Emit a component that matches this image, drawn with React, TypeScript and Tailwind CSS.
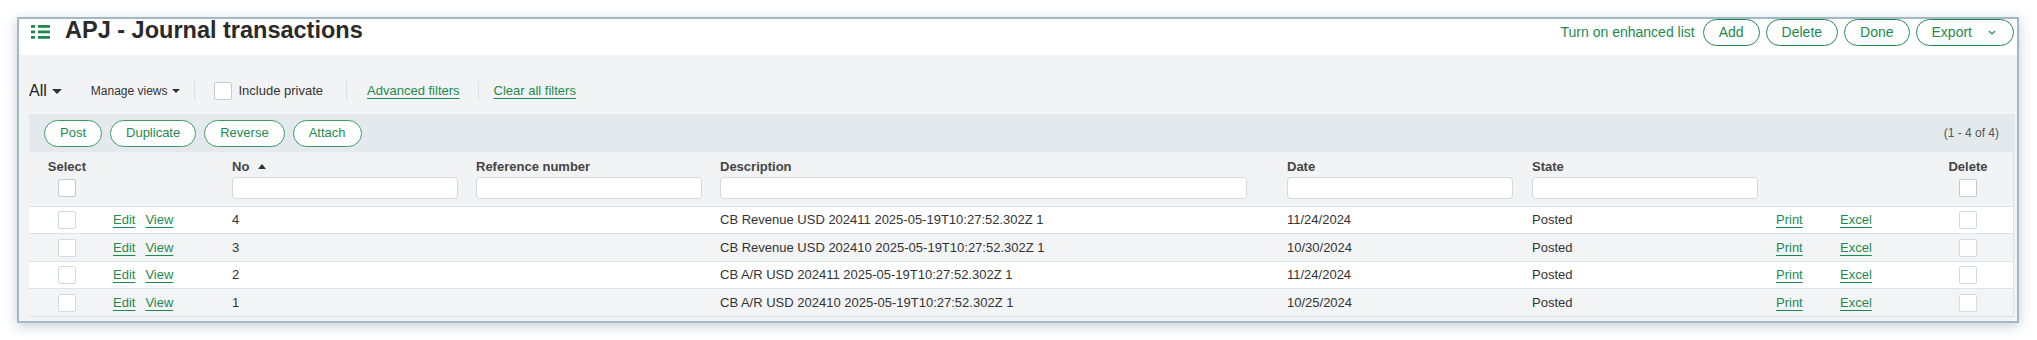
import React from "react";

const rows = [
  { no: "4", desc: "CB Revenue USD 202411 2025-05-19T10:27:52.302Z 1", date: "11/24/2024" },
  { no: "3", desc: "CB Revenue USD 202410 2025-05-19T10:27:52.302Z 1", date: "10/30/2024" },
  { no: "2", desc: "CB A/R USD 202411 2025-05-19T10:27:52.302Z 1", date: "11/24/2024" },
  { no: "1", desc: "CB A/R USD 202410 2025-05-19T10:27:52.302Z 1", date: "10/25/2024" },
];

const GRID =
  "grid grid-cols-[76px_127px_244px_244px_567px_245px_244px_64px_90px_76px_1fr]";

function Box({ light }: { light?: boolean }) {
  return (
    <div
      className={
        "w-[18px] h-[18px] bg-white rounded-[2px] border " +
        (light ? "border-[#d3d9de]" : "border-[#c3cad0]")
      }
    />
  );
}

function Caret({ w, h }: { w: number; h: number }) {
  return (
    <svg width={w} height={h} viewBox="0 0 10 5" className="fill-[#333]">
      <path d="M0 0 L10 0 L5 5 Z" />
    </svg>
  );
}

function Link({ children }: { children: React.ReactNode }) {
  return (
    <span className="text-[#1d8a4d] underline underline-offset-[3px] decoration-[1px]">
      {children}
    </span>
  );
}

function HeadBtn({ children }: { children: React.ReactNode }) {
  return (
    <button className="h-[27px] px-[15px] rounded-full border-[1.5px] border-[#1f8a4f] bg-white text-[14px] text-[#1d8a4d] flex items-center">
      {children}
    </button>
  );
}

function BandBtn({ children }: { children: React.ReactNode }) {
  return (
    <button className="h-[27px] px-[15px] rounded-full border border-[#3c9d64] bg-white text-[13px] text-[#1d8a4d] flex items-center">
      {children}
    </button>
  );
}

function Sep() {
  return <div className="w-px h-[20px] bg-[#dfe2e5]" />;
}

function HeadCell({ label, input, width, sort }: { label: string; input?: boolean; width?: string; sort?: boolean }) {
  return (
    <div className="flex flex-col items-start pt-[6px]">
      <div className="h-[17px] flex items-center text-[13px] font-bold text-[#444]">
        {label}
        {sort && (
          <svg width="8" height="5" viewBox="0 0 8 5" className="ml-[9px] fill-[#333]">
            <path d="M0 5 L8 5 L4 0 Z" />
          </svg>
        )}
      </div>
      {input && (
        <div className={"mt-[2px] h-[22px] bg-white border border-[#d2dadf] rounded-[4px] " + (width ?? "w-[226px]")} />
      )}
    </div>
  );
}

export default function App() {
  return (
    <div className="w-[2037px] h-[340px] bg-white pt-[17px] pl-[17px] font-['Liberation_Sans',Arial,sans-serif] text-[#333]">
      <div className="w-[2002px] h-[306px] border-2 border-[#a3b8c5] shadow-[0_3px_12px_rgba(70,95,115,0.3)] flex flex-col bg-[#f2f3f5]">
        {/* Header */}
        <div className="h-[36px] bg-white flex items-start pr-[3px]">
          <svg width="19" height="14" viewBox="0 0 19 14" className="ml-[12px] mt-[6px] fill-[#1d8a4d]">
            <rect x="0" y="0" width="4" height="2.8" />
            <rect x="7" y="0" width="12" height="2.8" />
            <rect x="0" y="5.5" width="4" height="2.8" />
            <rect x="7" y="5.5" width="12" height="2.8" />
            <rect x="0" y="11" width="4" height="2.8" />
            <rect x="7" y="11" width="12" height="2.8" />
          </svg>
          <div className="ml-[15px] text-[23.5px] leading-none font-bold text-[#2a2a2a]">
            APJ - Journal transactions
          </div>
          <div className="ml-auto flex items-center h-[27px]">
            <span className="text-[14px] text-[#1d8a4d] mr-[8px]">Turn on enhanced list</span>
            <div className="flex items-center gap-[6px]">
              <HeadBtn>Add</HeadBtn>
              <HeadBtn>Delete</HeadBtn>
              <HeadBtn>Done</HeadBtn>
              <HeadBtn>
                Export
                <svg width="8" height="5" viewBox="0 0 8 5" className="ml-[16px] mr-[2px] stroke-[#1d8a4d] fill-none">
                  <path d="M1 1 L4 4 L7 1" strokeWidth="1.2" />
                </svg>
              </HeadBtn>
            </div>
          </div>
        </div>

        {/* Gray body */}
        <div className="flex-1 pl-[10px] pr-[2px] pt-[24px]">
          {/* Filter row */}
          <div className="h-[24px] flex items-center">
            <span className="text-[16px] text-[#222]">All</span>
            <span className="ml-[5px]">
              <Caret w={10} h={5} />
            </span>
            <span className="ml-[29px] text-[12px] text-[#333]">Manage views</span>
            <span className="ml-[4px]">
              <Caret w={8} h={4} />
            </span>
            <div className="ml-[14px]">
              <Sep />
            </div>
            <div className="ml-[19px]">
              <Box />
            </div>
            <span className="ml-[7px] text-[13px] text-[#333]">Include private</span>
            <div className="ml-[23px]">
              <Sep />
            </div>
            <span className="ml-[20px] text-[13px]">
              <Link>Advanced filters</Link>
            </span>
            <div className="ml-[18px]">
              <Sep />
            </div>
            <span className="ml-[15px] text-[13px]">
              <Link>Clear all filters</Link>
            </span>
          </div>

          {/* Toolbar band */}
          <div className="mt-[11px] h-[38px] bg-[#e3e9ec] flex items-center pl-[15px] pr-[16px]">
            <div className="flex items-center gap-[8px]">
              <BandBtn>Post</BandBtn>
              <BandBtn>Duplicate</BandBtn>
              <BandBtn>Reverse</BandBtn>
              <BandBtn>Attach</BandBtn>
            </div>
            <span className="ml-auto text-[12px] text-[#555]">(1 - 4 of 4)</span>
          </div>

          {/* Table */}
          <div className="mr-[1px] border-r border-[#dde2e6]">
            <div className={GRID + " h-[55px] border-b border-[#dbe1e5]"}>
              <div className="flex flex-col items-center pt-[6px]">
                <div className="h-[17px] flex items-center text-[13px] font-bold text-[#444]">Select</div>
                <div className="mt-[4px]">
                  <Box />
                </div>
              </div>
              <div />
              <HeadCell label="No" input sort />
              <HeadCell label="Reference number" input />
              <HeadCell label="Description" input width="w-[527px]" />
              <HeadCell label="Date" input />
              <HeadCell label="State" input />
              <div />
              <div />
              <div className="flex flex-col items-center pt-[6px]">
                <div className="h-[17px] flex items-center text-[13px] font-bold text-[#444]">Delete</div>
                <div className="mt-[4px]">
                  <Box />
                </div>
              </div>
              <div />
            </div>
            {rows.map((r, i) => (
              <div
                key={r.no}
                className={
                  GRID +
                  " items-center border-b border-[#dde2e6] text-[13px] text-[#333] " +
                  (i % 2 === 0 ? "bg-white h-[27px]" : "bg-[#f3f4f6] h-[28px]")
                }
              >
                <div className="flex justify-center">
                  <Box light />
                </div>
                <div className="pl-[8px] flex gap-[10px]">
                  <Link>Edit</Link>
                  <Link>View</Link>
                </div>
                <div>{r.no}</div>
                <div />
                <div>{r.desc}</div>
                <div>{r.date}</div>
                <div>Posted</div>
                <div>
                  <Link>Print</Link>
                </div>
                <div>
                  <Link>Excel</Link>
                </div>
                <div className="flex justify-center">
                  <Box light />
                </div>
                <div />
              </div>
            ))}
          </div>
        </div>
      </div>
    </div>
  );
}
